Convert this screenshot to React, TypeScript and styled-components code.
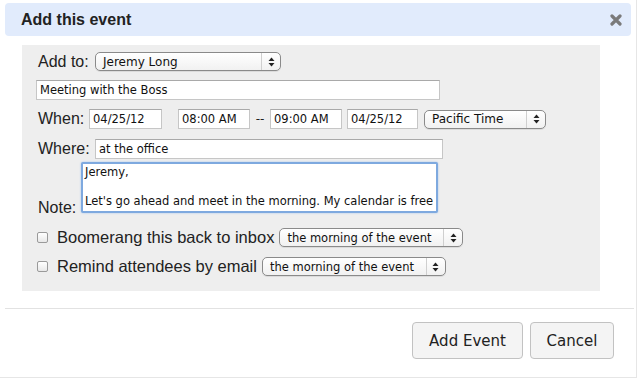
import React from "react";
import styled, { createGlobalStyle } from "styled-components";

const Global = createGlobalStyle`
  html, body { margin: 0; padding: 0; background: #fff; }
  body { font-family: "Liberation Sans", Arial, sans-serif; }
`;

const Dialog = styled.div`
  width: 637px;
  height: 378px;
  box-sizing: border-box;
  border-right: 1px solid #e6e6e6;
  border-bottom: 1px solid #e6e6e6;
  padding-top: 3px;
  display: flex;
  flex-direction: column;
`;

const Header = styled.div`
  margin: 0 5px 0 5px;
  height: 33px;
  background: #e1ebfc;
  border-radius: 4px;
  display: flex;
  align-items: center;
  justify-content: space-between;
  padding: 0 9px 0 16px;
`;

const Title = styled.h1`
  margin: 0;
  font: bold 16px "Liberation Sans", Arial, sans-serif;
  color: #222;
`;

const Close = styled.button`
  border: 0;
  background: none;
  padding: 0;
  width: 12px;
  height: 12px;
  display: flex;
  cursor: pointer;
`;

const Panel = styled.div`
  margin: 9px 0 0 22px;
  width: 578px;
  height: 246px;
  box-sizing: border-box;
  background: #eeeeee;
  padding: 7px 0 0 14px;
  display: flex;
  flex-direction: column;
`;

const Row = styled.div<{ $mt?: number; $align?: string }>`
  display: flex;
  align-items: ${(p) => p.$align || "center"};
  margin-top: ${(p) => p.$mt ?? 0}px;
`;

const Label = styled.span<{ $w: number; $drop?: number }>`
  font-size: 16px;
  color: #222;
  width: ${(p) => p.$w}px;
  margin-left: 2px;
  margin-bottom: ${(p) => -(p.$drop ?? 0)}px;
  flex: none;
  line-height: 18px;
`;

const Input = styled.div<{ $w: number; $ml?: number }>`
  width: ${(p) => p.$w}px;
  height: 20px;
  box-sizing: border-box;
  margin-left: ${(p) => p.$ml ?? 0}px;
  background: #fff;
  border: 1px solid #c6c6c6;
  border-top-color: #a9a9a9;
  font: 11.5px "DejaVu Sans", Verdana, sans-serif;
  color: #111;
  padding: 0 3px;
  display: flex;
  align-items: center;
  white-space: nowrap;
  overflow: hidden;
`;

const Select = styled.div<{ $w: number; $ml?: number; $small?: boolean }>`
  width: ${(p) => p.$w}px;
  height: 19px;
  box-sizing: border-box;
  margin-left: ${(p) => p.$ml ?? 0}px;
  border: 1px solid #8a8a8a;
  border-radius: 5px;
  background: linear-gradient(#ffffff, #f1f1f1);
  display: flex;
  align-items: stretch;
  font: ${(p) => (p.$small ? "11.5px" : "12px")} "DejaVu Sans", Verdana, sans-serif;
  color: #111;
  box-shadow: 0 1px 0 rgba(0, 0, 0, 0.08);
`;

const SelectText = styled.span`
  flex: 1;
  display: flex;
  align-items: center;
  padding-left: 7px;
  white-space: nowrap;
  overflow: hidden;
`;

const SelectArrow = styled.span`
  width: 18px;
  border-left: 1px solid #cfcfcf;
  display: flex;
  align-items: center;
  justify-content: center;
`;

const Dash = styled.span`
  font: 12px "DejaVu Sans", Verdana, sans-serif;
  color: #222;
  width: 20px;
  text-align: center;
`;

const NoteArea = styled.div`
  width: 357px;
  height: 51px;
  box-sizing: border-box;
  background: #fff;
  border: 2px solid #7ea9df;
  border-radius: 2px;
  box-shadow: 0 0 2px #9cc0ee;
  font: 11.5px "DejaVu Sans", Verdana, sans-serif;
  color: #111;
  line-height: 14.5px;
  padding: 1px 2px;
  white-space: pre;
  overflow: hidden;
`;

const Check = styled.span`
  width: 9px;
  height: 9px;
  border: 1px solid #9a9a9a;
  border-radius: 2px;
  background: linear-gradient(#fff, #e8e8e8);
  margin: 0 9px 0 1px;
  flex: none;
`;

const CheckText = styled.span`
  font-size: 16.5px;
  color: #222;
  margin-right: 5px;
  white-space: nowrap;
`;

const Footer = styled.div`
  margin-top: 17px;
  margin-left: 5px;
  margin-right: 2px;
  border-top: 1px solid #e2e2e2;
  display: flex;
  justify-content: flex-end;
  gap: 7px;
  padding: 13px 20px 0 0;
`;

const Button = styled.button<{ $w: number }>`
  width: ${(p) => p.$w}px;
  height: 37px;
  border: 1px solid #c2c2c2;
  border-radius: 4px;
  background: #f4f4f4;
  font: 15px "DejaVu Sans", Tahoma, sans-serif;
  color: #222;
  padding: 0;
  cursor: pointer;
`;

const Arrows = () => (
  <svg width="7" height="10" viewBox="0 0 7 10">
    <path d="M3.5 0.5 L6.5 4 L0.5 4 Z" fill="#222" />
    <path d="M0.5 6 L6.5 6 L3.5 9.5 Z" fill="#222" />
  </svg>
);

const FakeSelect = ({ w, ml, small, children }: { w: number; ml?: number; small?: boolean; children: React.ReactNode }) => (
  <Select $w={w} $ml={ml} $small={small}>
    <SelectText>{children}</SelectText>
    <SelectArrow>
      <Arrows />
    </SelectArrow>
  </Select>
);

export default function App() {
  return (
    <>
      <Global />
      <Dialog>
        <Header>
          <Title>Add this event</Title>
          <Close aria-label="Close">
            <svg width="12" height="12" viewBox="0 0 12 12">
              <path d="M2 2 L10 10 M10 2 L2 10" stroke="#7a7a7a" strokeWidth="3.2" strokeLinecap="round" />
            </svg>
          </Close>
        </Header>
        <Panel>
          <Row>
            <Label $w={57}>Add to:</Label>
            <FakeSelect w={186}>Jeremy Long</FakeSelect>
          </Row>
          <Row $mt={9}>
            <Input $w={404}>Meeting with the Boss</Input>
          </Row>
          <Row $mt={9}>
            <Label $w={51}>When:</Label>
            <Input $w={73}>04/25/12</Input>
            <Input $w={72} $ml={16}>08:00 AM</Input>
            <Dash>--</Dash>
            <Input $w={72}>09:00 AM</Input>
            <Input $w={71} $ml={5}>04/25/12</Input>
            <FakeSelect w={122} ml={6}>Pacific Time</FakeSelect>
          </Row>
          <Row $mt={10}>
            <Label $w={57}>Where:</Label>
            <Input $w={348}>at the office</Input>
          </Row>
          <Row $mt={3} $align="flex-end">
            <Label $w={43} $drop={4}>Note:</Label>
            <NoteArea>{"Jeremy,\n\nLet's go ahead and meet in the morning. My calendar is free"}</NoteArea>
          </Row>
          <Row $mt={15}>
            <Check />
            <CheckText>Boomerang this back to inbox</CheckText>
            <FakeSelect w={184} small>the morning of the event</FakeSelect>
          </Row>
          <Row $mt={10}>
            <Check />
            <CheckText>Remind attendees by email</CheckText>
            <FakeSelect w={184} small>the morning of the event</FakeSelect>
          </Row>
        </Panel>
        <Footer>
          <Button $w={111}>Add Event</Button>
          <Button $w={84}>Cancel</Button>
        </Footer>
      </Dialog>
    </>
  );
}
